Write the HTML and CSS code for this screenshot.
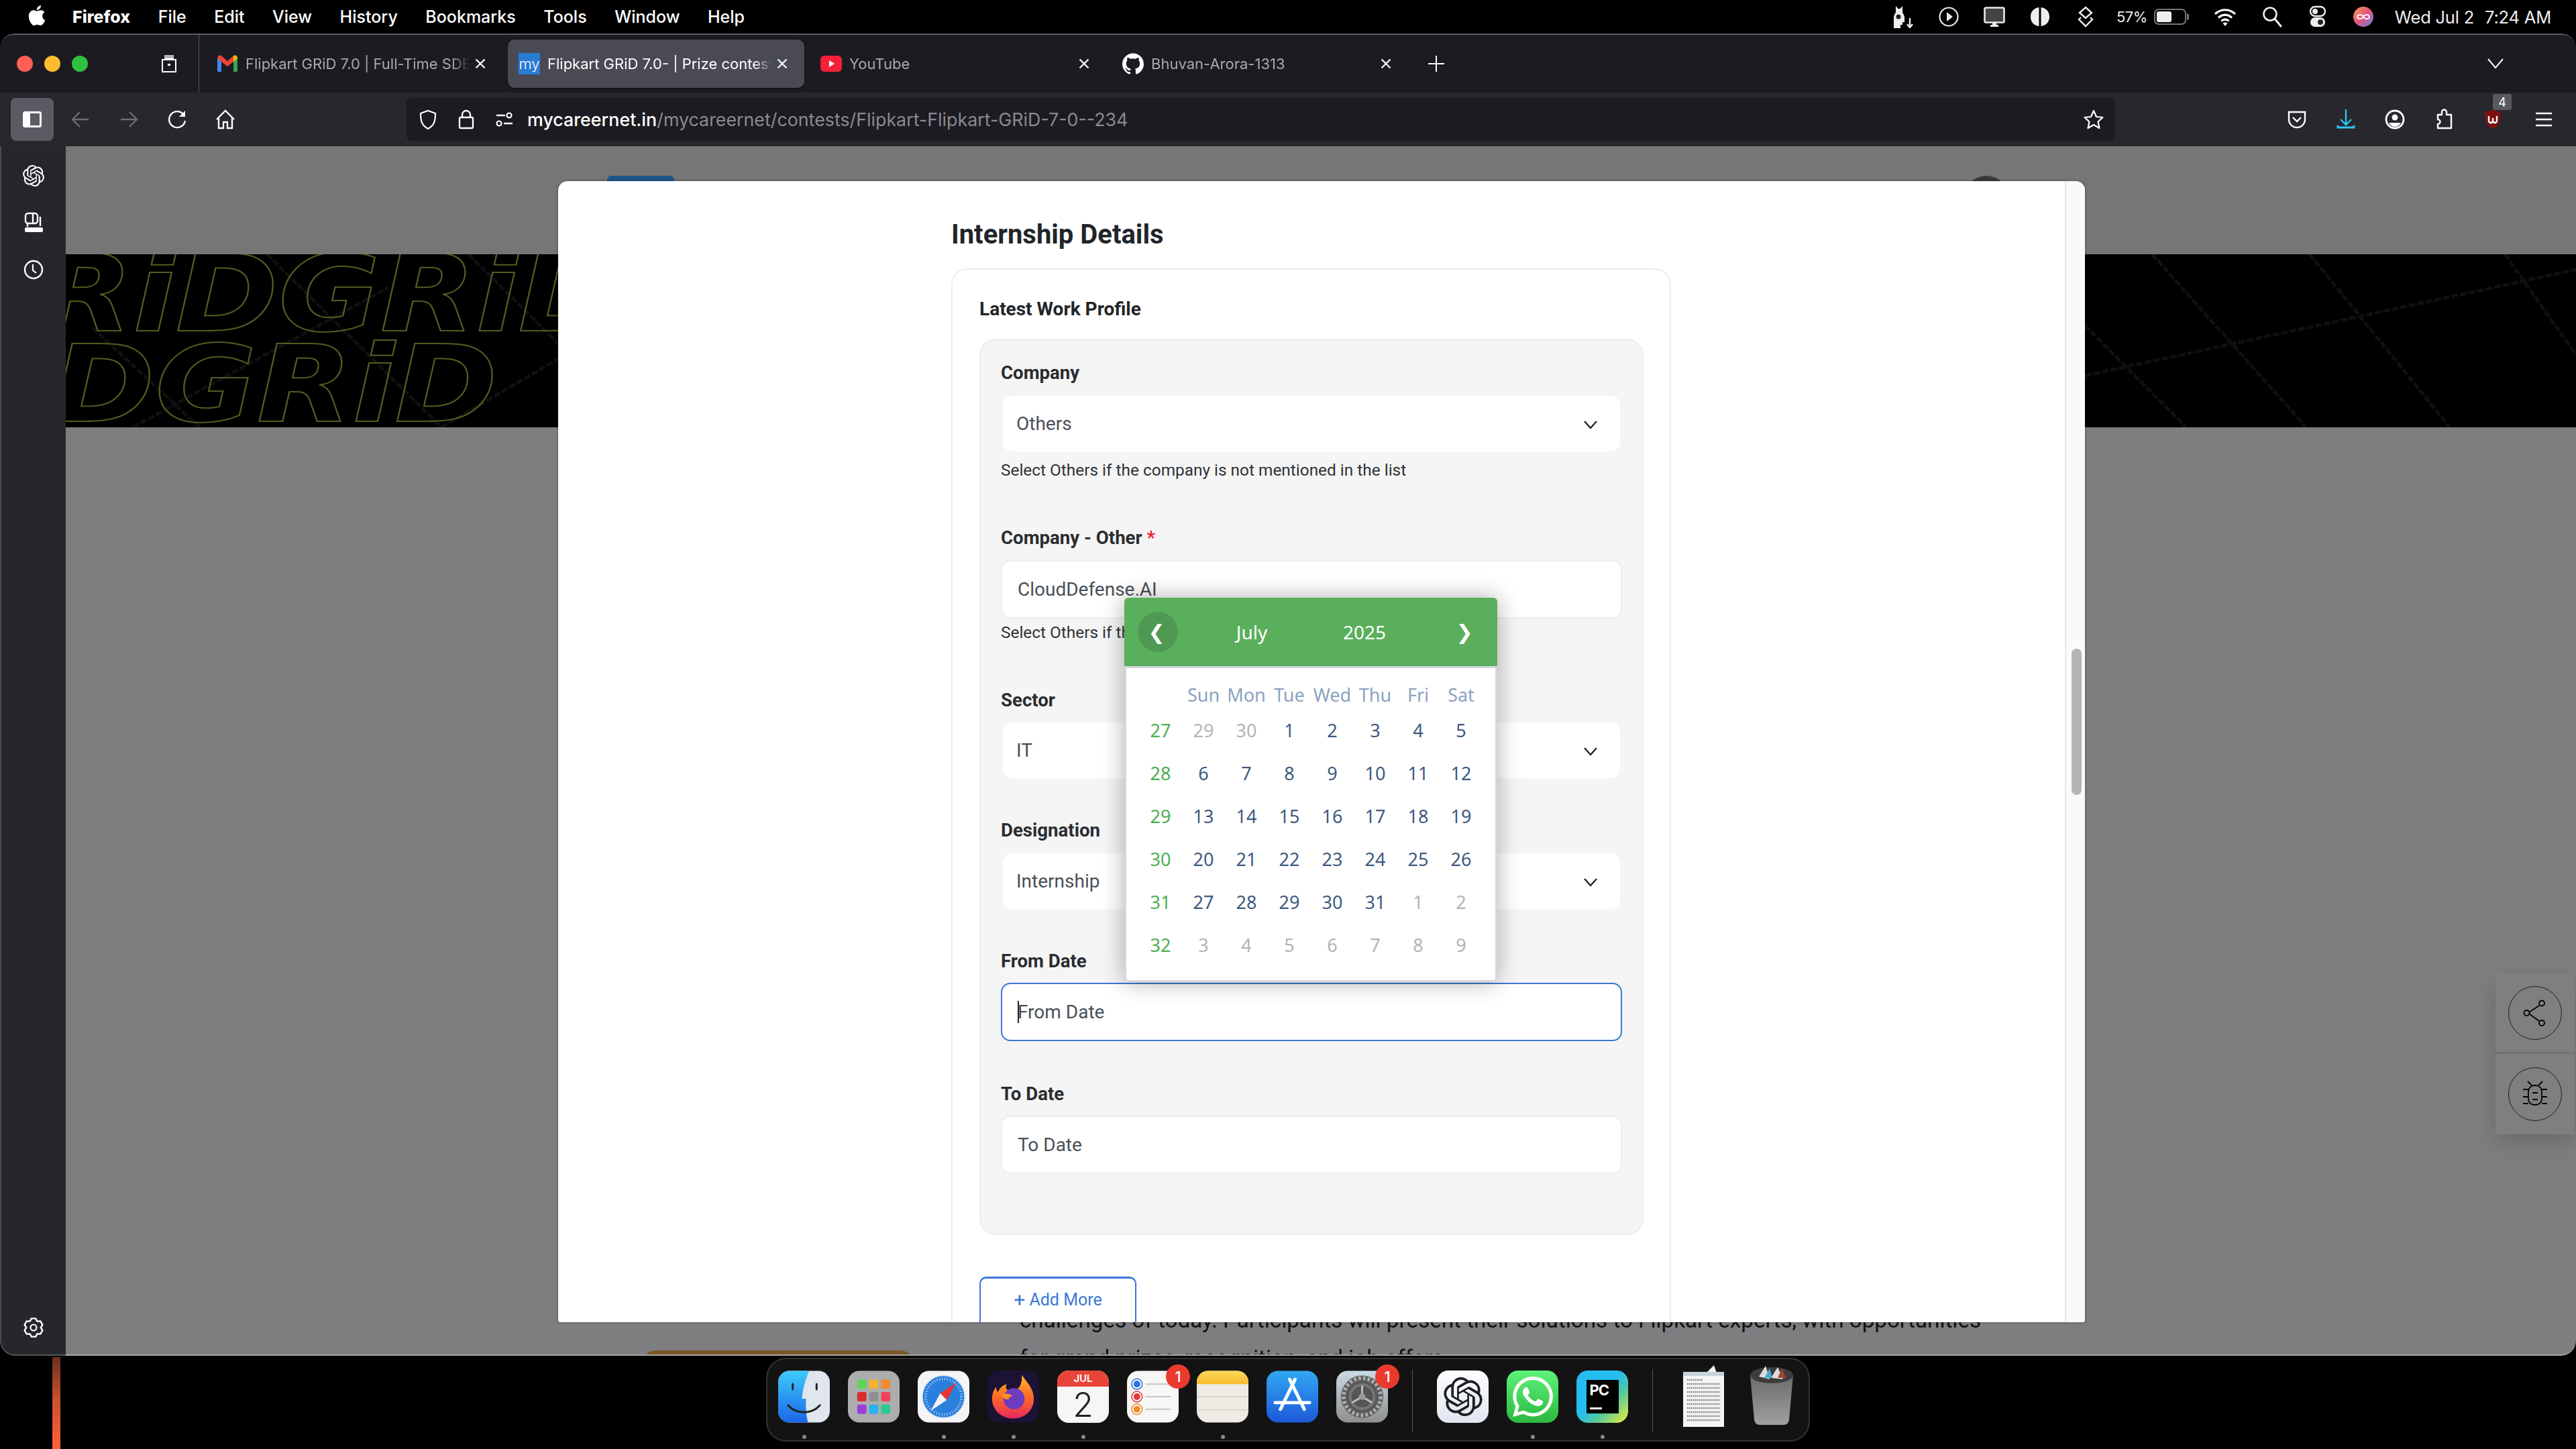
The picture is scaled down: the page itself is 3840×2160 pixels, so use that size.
FILE: index.html
```html
<!DOCTYPE html>
<html lang="en">
<head>
<meta charset="utf-8">
<title>Flipkart GRiD 7.0</title>
<link rel="stylesheet" href="styles.css">
</head>
<body>
<div class="desktop">
  <header class="menubar">
    <svg class="apple" viewBox="0 0 24 24"><path fill="#fff" d="M12.152 6.896c-.948 0-2.415-1.078-3.96-1.04-2.04.027-3.91 1.183-4.961 3.014-2.117 3.675-.546 9.103 1.519 12.09 1.013 1.454 2.208 3.09 3.792 3.039 1.52-.065 2.09-.987 3.935-.987 1.831 0 2.35.987 3.96.948 1.637-.026 2.676-1.48 3.676-2.948 1.156-1.688 1.636-3.325 1.662-3.415-.039-.013-3.182-1.221-3.22-4.857-.026-3.04 2.48-4.494 2.597-4.559-1.429-2.09-3.623-2.324-4.39-2.376-2-.156-3.675 1.09-4.61 1.09zM15.53 3.83c.843-1.012 1.4-2.427 1.245-3.83-1.207.052-2.662.805-3.532 1.818-.78.896-1.454 2.338-1.273 3.714 1.338.104 2.715-.688 3.559-1.701"/></svg>
    <nav class="menu">
      <span class="menu-app">Firefox</span><span>File</span><span>Edit</span><span>View</span><span>History</span><span>Bookmarks</span><span>Tools</span><span>Window</span><span>Help</span>
    </nav>
    <div class="status">
      <svg class="st" viewBox="0 0 34 34"><path fill="#eee" d="M3 34V18c0-3 1-5 3-7V1l3.500 4h3L16 1v10c2 2 3 5 3 8v6h-3v4h-3v5z"/><circle cx="10" cy="17" r="3.500" fill="#222"/><path stroke="#eee" stroke-width="2.400" fill="none" d="M27 19v14m-4-5 4 5 4-5"/></svg>
      <svg class="st" viewBox="0 0 34 34"><circle cx="17" cy="17" r="13.500" fill="none" stroke="#e8e8e8" stroke-width="2.200"/><path fill="#e8e8e8" d="M14 10l9 7-9 7z"/></svg>
      <svg class="st" viewBox="0 0 34 34"><rect x="2.500" y="3.500" width="29" height="22" rx="2" fill="#444" stroke="#e8e8e8" stroke-width="2.600"/><rect x="14" y="26" width="6" height="4" fill="#e8e8e8"/><rect x="11" y="29" width="12" height="3" fill="#e8e8e8"/></svg>
      <svg class="st" viewBox="0 0 34 34"><path fill="#eee" d="M15.500 3C8 4 3 9 3 17s5 13 12.500 14zM18.500 3C26 4 31 9 31 17s-5 13-12.500 14z"/></svg>
      <svg class="st" viewBox="0 0 34 34"><path fill="none" stroke="#eee" stroke-width="2.400" d="M17 3l9 8-9 8-9-8zM10 18l-3 3 10 10 10-10-3-3"/></svg>
      <div class="batt"><span class="pct">57%</span><span class="batt-shell"><span class="batt-fill"></span></span></div>
      <svg class="st wifi" viewBox="0 0 34 34"><path fill="none" stroke="#fff" stroke-width="3.200" stroke-linecap="round" d="M3 12c8-7 20-7 28 0M8 17.500c5-4.500 13-4.500 18 0M12.500 22.500c3-2 6-2 9 0"/><path fill="#fff" d="M17 31l-3.500-4.500c2-1.500 5-1.500 7 0z"/></svg>
      <svg class="st srch" viewBox="0 0 34 34"><circle cx="14" cy="13" r="9.500" fill="none" stroke="#eee" stroke-width="2.600"/><path stroke="#eee" stroke-width="3" stroke-linecap="round" d="M21 20l9 11"/></svg>
      <svg class="st" viewBox="0 0 34 34"><rect x="6" y="2" width="22" height="14" rx="7" fill="none" stroke="#eee" stroke-width="2.400"/><circle cx="13" cy="9" r="4" fill="#eee"/><rect x="6" y="18" width="22" height="14" rx="7" fill="#eee"/><circle cx="21" cy="25" r="4" fill="#222"/></svg>
      <svg class="st" viewBox="0 0 34 34"><defs><linearGradient id="siri" x1="0" y1="0" x2="1" y2="1"><stop offset="0" stop-color="#f6a44c"/><stop offset=".5" stop-color="#e6527e"/><stop offset="1" stop-color="#5a8cf0"/></linearGradient></defs><circle cx="17" cy="17" r="15" fill="url(#siri)"/><path fill="none" stroke="#fff" stroke-width="1.800" d="M17 17c-3-5-9-3-9 0s6 5 9 0 9-3 9 0-6 5-9 0z"/></svg>
      <div class="clock"><span>Wed Jul 2</span><span>7:24 AM</span></div>
    </div>
  </header>

  <div class="window">
    <div class="tabbar">
      <div class="lights"><i class="light red"></i><i class="light yellow"></i><i class="light green"></i></div>
      <div class="tabs-btn"><svg viewBox="0 0 30 30" class="ic30"><path fill="none" stroke="#fff" stroke-width="2" d="M5 9h20v18H5zM8 3.500h14"/><rect x="8" y="5.500" width="14" height="3" fill="#fff"/><rect x="13" y="15" width="4" height="3" fill="#fff"/></svg></div>
      <div class="tabs">
        <div class="tab">
          <svg class="fav" viewBox="0 0 32 32"><path fill="#4285f4" d="M1 8h6v20H3a2 2 0 0 1-2-2z"/><path fill="#34a853" d="M25 8h6v18a2 2 0 0 1-2 2h-4z"/><path fill="#ea4335" d="M1 8c0-4 4-6 7-3l8 7 8-7c3-3 7-1 7 3l-6 5-9 7-9-7z"/><path fill="#fbbc04" d="M25 5c3-3 6-1 6 3l-6 5z"/></svg>
          <span class="tab-title">Flipkart GRiD 7.0 | Full-Time SDE</span><span class="tab-x">×</span>
        </div>
        <div class="tab tab-active">
          <span class="fav fav-my">my</span>
          <span class="tab-title">Flipkart GRiD 7.0- | Prize contest</span><span class="tab-x">×</span>
        </div>
        <div class="tab">
          <svg class="fav" viewBox="0 0 32 32"><rect x="0" y="4" width="32" height="24" rx="6" fill="#f4213a"/><path fill="#fff" d="M13 11l8 5-8 5z"/></svg>
          <span class="tab-title">YouTube</span><span class="tab-x">×</span>
        </div>
        <div class="tab">
          <svg class="fav" viewBox="0 0 24 24"><path fill="#fff" d="M12 .297c-6.630 0-12 5.373-12 12 0 5.303 3.438 9.800 8.205 11.385.6.113.82-.258.82-.577 0-.285-.01-1.040-.015-2.040-3.338.724-4.042-1.610-4.042-1.610C4.422 18.070 3.633 17.700 3.633 17.700c-1.087-.744.084-.729.084-.729 1.205.084 1.838 1.236 1.838 1.236 1.070 1.835 2.809 1.305 3.495.998.108-.776.417-1.305.76-1.605-2.665-.3-5.466-1.332-5.466-5.930 0-1.310.465-2.380 1.235-3.220-.135-.303-.54-1.523.105-3.176 0 0 1.005-.322 3.300 1.230.96-.267 1.980-.399 3-.405 1.020.006 2.040.138 3 .405 2.280-1.552 3.285-1.230 3.285-1.230.645 1.653.24 2.873.12 3.176.765.84 1.230 1.910 1.230 3.220 0 4.610-2.805 5.625-5.475 5.920.42.36.81 1.096.81 2.220 0 1.606-.015 2.896-.015 3.286 0 .315.21.69.825.57C20.565 22.092 24 17.592 24 12.297c0-6.627-5.373-12-12-12"/></svg>
          <span class="tab-title">Bhuvan-Arora-1313</span><span class="tab-x">×</span>
        </div>
      </div>
      <svg class="newtab" viewBox="0 0 26 26"><path stroke="#fff" stroke-width="2" d="M13 1v24M1 13h24"/></svg>
      <svg class="tabmenu" viewBox="0 0 26 18"><path fill="none" stroke="#fff" stroke-width="2" d="M2 2l11 13L24 2"/></svg>
    </div>

    <div class="toolbar">
      <div class="side-btn"><svg viewBox="0 0 32 32" class="ic32"><rect x="3.500" y="5.500" width="25" height="21" rx="2" fill="none" stroke="#fff" stroke-width="3"/><rect x="4" y="6" width="9" height="20" fill="#fff"/></svg></div>
      <div class="tbtn"><svg viewBox="0 0 32 32" class="ic32"><path fill="none" stroke="#6d6d73" stroke-width="2.400" d="M28 16H5m10-11L4 16l11 11"/></svg></div>
      <div class="tbtn"><svg viewBox="0 0 32 32" class="ic32"><path fill="none" stroke="#6d6d73" stroke-width="2.400" d="M4 16h23M17 5l11 11-11 11"/></svg></div>
      <div class="tbtn"><svg viewBox="0 0 32 32" class="ic32"><path fill="none" stroke="#fff" stroke-width="2.400" d="M25 8A12 12 0 1 0 28 18"/><path fill="#fff" d="M28 3v9h-9z"/></svg></div>
      <div class="tbtn"><svg viewBox="0 0 32 32" class="ic32"><path fill="none" stroke="#fff" stroke-width="2.400" d="M3 16L16 3l13 13M6 14v15h7v-9h6v9h7V14"/></svg></div>
      <div class="urlbar">
        <svg viewBox="0 0 32 32" class="ic32"><path fill="none" stroke="#fff" stroke-width="2.200" d="M16 3l11 4c0 12-2 18-11 23C7 25 5 19 5 7z"/></svg>
        <svg viewBox="0 0 32 32" class="ic32 lock"><rect x="6" y="13" width="20" height="16" rx="2" fill="none" stroke="#fff" stroke-width="2.400"/><path fill="none" stroke="#fff" stroke-width="2.400" d="M10 13V9a6 6 0 0 1 12 0v4"/></svg>
        <svg viewBox="0 0 32 32" class="ic32 lock"><path stroke="#fff" stroke-width="2.400" d="M4 10h13M15 22h13"/><circle cx="23" cy="10" r="3.500" fill="none" stroke="#fff" stroke-width="2.200"/><circle cx="8" cy="22" r="3.500" fill="none" stroke="#fff" stroke-width="2.200"/></svg>
        <div class="url"><span class="url-host">mycareernet.in</span><span class="url-path">/mycareernet/contests/Flipkart-Flipkart-GRiD-7-0--234</span></div>
        <svg viewBox="0 0 32 32" class="ic32 star"><path fill="none" stroke="#fff" stroke-width="2.200" stroke-linejoin="round" d="M16 3l4 9 9.500 1-7 6.500 2 9.500-8.500-5-8.500 5 2-9.500-7-6.500 9.500-1z"/></svg>
      </div>
      <div class="tools">
        <div class="tool"><svg viewBox="0 0 32 32" class="ic32"><path fill="none" stroke="#fff" stroke-width="2.400" d="M4 5h24v11a12 12 0 0 1-24 0z"/><path fill="none" stroke="#fff" stroke-width="2.400" d="M10 13l6 6 6-6"/></svg></div>
        <div class="tool"><svg viewBox="0 0 32 32" class="ic32"><path fill="none" stroke="#2fc5f2" stroke-width="2.400" d="M16 1v23M8 16l8 8 8-8"/><path fill="none" stroke="#2fc5f2" stroke-width="3" d="M4 25v3h24v-3"/></svg></div>
        <div class="tool"><svg viewBox="0 0 32 32" class="ic32"><circle cx="16" cy="16" r="13" fill="none" stroke="#fff" stroke-width="2.800"/><circle cx="16" cy="13" r="4.500" fill="#fff"/><path fill="#fff" d="M7 21h18c-2 4-5 6-9 6s-7-2-9-6z"/></svg></div>
        <div class="tool"><svg viewBox="0 0 32 32" class="ic32"><path fill="none" stroke="#fff" stroke-width="2.400" stroke-linejoin="round" d="M13 9V5a3.500 3.500 0 0 1 7 0v4h7v20H7v-6a3.500 3.500 0 0 0 0-7V9z"/></svg></div>
        <div class="tool tool-ub"><svg viewBox="0 0 32 32" class="ic32"><path fill="#7a1210" d="M16 2l12 3c0 14-3 21-12 25C7 26 4 19 4 5z"/><path fill="none" stroke="#fff" stroke-width="2.400" d="M10 11v7a3 3 0 0 0 6 0v-4m0 4a3 3 0 0 0 6 0v-7"/></svg><span class="ub-badge">4</span></div>
        <div class="tool tool-menu"><svg viewBox="0 0 32 32" class="ic32"><path stroke="#fff" stroke-width="2.400" d="M4 7h24M4 16h24M4 25h24"/></svg></div>
      </div>
    </div>

    <div class="main">
      <aside class="sidebar">
        <div class="side-top">
          <svg viewBox="0 0 24 24" class="ic32"><path fill="#fff" d="M22.2819 9.8211a5.9847 5.9847 0 0 0-.5157-4.9108 6.0462 6.0462 0 0 0-6.5098-2.9A6.0651 6.0651 0 0 0 4.9807 4.1818a5.9847 5.9847 0 0 0-3.9977 2.9 6.0462 6.0462 0 0 0 .7427 7.0966 5.98 5.98 0 0 0 .511 4.9107 6.051 6.051 0 0 0 6.5146 2.9001A5.9847 5.9847 0 0 0 13.2599 24a6.0557 6.0557 0 0 0 5.7718-4.2058 5.9894 5.9894 0 0 0 3.9977-2.9001 6.0557 6.0557 0 0 0-.7475-7.0729zm-9.022 12.6081a4.4755 4.4755 0 0 1-2.8764-1.0408l.1419-.0804 4.7783-2.7582a.7948.7948 0 0 0 .3927-.6813v-6.7369l2.02 1.1686a.071.071 0 0 1 .038.052v5.5826a4.504 4.504 0 0 1-4.4945 4.4944zm-9.6607-4.1254a4.4708 4.4708 0 0 1-.5346-3.0137l.142.0852 4.783 2.7582a.7712.7712 0 0 0 .7806 0l5.8428-3.3685v2.3324a.0804.0804 0 0 1-.0332.0615L9.74 19.9502a4.4992 4.4992 0 0 1-6.1408-1.6464zM2.3408 7.8956a4.485 4.485 0 0 1 2.3655-1.9728V11.6a.7664.7664 0 0 0 .3879.6765l5.8144 3.3543-2.0201 1.1685a.0757.0757 0 0 1-.071 0l-4.8303-2.7865A4.504 4.504 0 0 1 2.3408 7.872zm16.5963 3.8558L13.1038 8.364 15.1192 7.2a.0757.0757 0 0 1 .071 0l4.8303 2.7913a4.4944 4.4944 0 0 1-.6765 8.1042v-5.6772a.79.79 0 0 0-.407-.667zm2.0107-3.0231l-.142-.0852-4.7735-2.7818a.7759.7759 0 0 0-.7854 0L9.409 9.2297V6.8974a.0662.0662 0 0 1 .0284-.0615l4.8303-2.7866a4.4992 4.4992 0 0 1 6.6802 4.66zM8.3065 12.863l-2.02-1.1638a.0804.0804 0 0 1-.038-.0567V6.0742a4.4992 4.4992 0 0 1 7.3757-3.4537l-.142.0805L8.704 5.459a.7948.7948 0 0 0-.3927.6813zm1.0976-2.3654l2.602-1.4998 2.6069 1.4998v2.9994l-2.5974 1.4997-2.6067-1.4997Z"/></svg>
          <svg viewBox="0 0 32 32" class="ic32"><rect x="4" y="2" width="18" height="15" rx="4" fill="none" stroke="#fff" stroke-width="2.400"/><path stroke="#fff" stroke-width="2.400" d="M15 3v13M26 7v14M7 17v5"/><rect x="3" y="23" width="27" height="7" rx="2" fill="#fff"/></svg>
          <svg viewBox="0 0 32 32" class="ic32"><circle cx="16" cy="16" r="13" fill="none" stroke="#fff" stroke-width="2.400"/><path fill="none" stroke="#fff" stroke-width="2.200" d="M15 8v9l5 4"/></svg>
        </div>
        <svg viewBox="0 0 32 32" class="ic32"><circle cx="16" cy="16" r="4.500" fill="none" stroke="#fff" stroke-width="2.200"/><path fill="none" stroke="#fff" stroke-width="2.400" stroke-linejoin="round" d="M12.850 2.360L19.150 2.360 21.400 6.650 26.240 6.450 29.390 11.900 26.800 16 29.390 20.090 26.240 25.550 21.400 25.350 19.150 29.640 12.850 29.640 10.600 25.350 5.760 25.550 2.610 20.090 5.200 16 2.610 11.900 5.760 6.450 10.600 6.650Z"/></svg>
      </aside>

      <section class="page">
        <div class="page-top">
          <span class="site-logo"></span><span class="site-avatar"></span>
        </div>
        <div class="banner">
          <svg class="banner-lines" viewBox="0 0 3742 258" preserveAspectRatio="none"><path fill="none" stroke="#101010" stroke-width="5" stroke-dasharray="10 3" d="M3110 0L3340 258M3345 0L3554 258M3636 0L3742 150M3010 106L3161 258M3010 181L3742 23M300 0L560 258M40 110L200 258M600 0L860 258M560 258L1000 0M100 258L480 50"/></svg>
          <div class="grid-row grid-row-a">GRiDGRiD</div>
          <div class="grid-row grid-row-b">GRiDGRiD</div>
        </div>
        <div class="page-rest">
          <span class="orange-bar"></span>
          <p class="page-copy">challenges of today. Participants will present their solutions to Flipkart experts, with opportunities<br>for grand prizes, recognition, and job offers</p>
        </div>

        <div class="float-tools">
          <div class="float-cell"><span class="float-circle"><svg viewBox="0 0 40 40" class="ic40"><path fill="none" stroke="#000" stroke-width="1.800" d="M11 19l15-10M11 21l15 11"/><circle cx="7.500" cy="20" r="4" fill="#808080" stroke="#000" stroke-width="1.800"/><circle cx="33" cy="5.500" r="4" fill="#808080" stroke="#000" stroke-width="1.800" transform="translate(-3 0)"/><circle cx="30" cy="35" r="4" fill="#808080" stroke="#000" stroke-width="1.800"/></svg></span></div>
          <div class="float-cell"><span class="float-circle"><svg viewBox="0 0 40 40" class="ic40"><rect x="10" y="7" width="20" height="29" rx="9" fill="none" stroke="#000" stroke-width="1.800"/><path fill="none" stroke="#000" stroke-width="1.800" d="M9 1l6 6M31 1l-6 6M2 13h8M30 13h8M2 24h8M30 24h8M2 34h8M30 34h8M16 18h8M16 28h8"/></svg></span></div>
        </div>

        <div class="modal">
          <div class="modal-scroll">
            <h2 class="modal-title">Internship Details</h2>
            <div class="card">
              <h3 class="card-title">Latest Work Profile</h3>
              <div class="panel">
                <div class="field field-first">
                  <label class="label">Company</label>
                  <div class="select"><span>Others</span><svg class="chev" viewBox="0 0 24 24"><path fill="none" stroke="#212529" stroke-width="2.400" d="M3 8l9 10 9-10"/></svg></div>
                  <p class="help">Select Others if the company is not mentioned in the list</p>
                </div>
                <div class="field field-after-help">
                  <label class="label">Company - Other <em class="req">*</em></label>
                  <div class="input">CloudDefense.AI</div>
                  <p class="help help-tight">Select Others if the company is not mentioned in the list</p>
                </div>
                <div class="field field-after-help">
                  <label class="label">Sector</label>
                  <div class="select"><span>IT</span><svg class="chev" viewBox="0 0 24 24"><path fill="none" stroke="#212529" stroke-width="2.400" d="M3 8l9 10 9-10"/></svg></div>
                </div>
                <div class="field">
                  <label class="label">Designation</label>
                  <div class="select"><span>Internship</span><svg class="chev" viewBox="0 0 24 24"><path fill="none" stroke="#212529" stroke-width="2.400" d="M3 8l9 10 9-10"/></svg></div>
                </div>
                <div class="field">
                  <label class="label label-input">From Date</label>
                  <div class="input input-focus"><i class="caret"></i>From Date</div>
                </div>
                <div class="field field-last">
                  <label class="label label-input">To Date</label>
                  <div class="input">To Date</div>
                </div>
              </div>
              <button class="add-more"><span class="plus">+</span> Add More</button>
            </div>
          </div>
          <div class="modal-track"><span class="modal-thumb"></span></div>

          <div class="calendar">
            <div class="cal-head">
              <span class="cal-prev">❮</span><span class="cal-mon">July</span><span class="cal-mon">2025</span><span class="cal-next">❯</span>
            </div>
            <div class="cal-body">
              <span></span><span class="wd">Sun</span><span class="wd">Mon</span><span class="wd">Tue</span><span class="wd">Wed</span><span class="wd">Thu</span><span class="wd">Fri</span><span class="wd">Sat</span>
              <span class="wk">27</span><span class="off">29</span><span class="off">30</span><span>1</span><span>2</span><span>3</span><span>4</span><span>5</span>
              <span class="wk">28</span><span>6</span><span>7</span><span>8</span><span>9</span><span>10</span><span>11</span><span>12</span>
              <span class="wk">29</span><span>13</span><span>14</span><span>15</span><span>16</span><span>17</span><span>18</span><span>19</span>
              <span class="wk">30</span><span>20</span><span>21</span><span>22</span><span>23</span><span>24</span><span>25</span><span>26</span>
              <span class="wk">31</span><span>27</span><span>28</span><span>29</span><span>30</span><span>31</span><span class="off">1</span><span class="off">2</span>
              <span class="wk">32</span><span class="off">3</span><span class="off">4</span><span class="off">5</span><span class="off">6</span><span class="off">7</span><span class="off">8</span><span class="off">9</span>
            </div>
          </div>
        </div>
      </section>
    </div>
  </div>

  <div class="wallpaper">
    <span class="flare"></span>
    <div class="dock">
      <div class="dock-item"><svg class="app" viewBox="0 0 78 78"><defs><linearGradient id="fb" x1="0" y1="0" x2="0" y2="1"><stop offset="0" stop-color="#3ecbfb"/><stop offset="1" stop-color="#1a66e8"/></linearGradient></defs><rect width="78" height="78" rx="17" fill="#dfe6ee"/><path fill="url(#fb)" d="M17 0h30c-6 14-10 28-11 42h6c-.5 12 0 24 3 36H17A17 17 0 0 1 0 61V17A17 17 0 0 1 17 0z"/><path stroke="#222" stroke-width="3" stroke-linecap="round" d="M22 20v8M58 20v8"/><path fill="none" stroke="#222" stroke-width="3" stroke-linecap="round" d="M15 52c12 14 36 14 48 0"/></svg><i class="dot"></i></div>
      <div class="dock-item"><svg class="app" viewBox="0 0 78 78"><rect width="78" height="78" rx="17" fill="#adadad"/><rect x="14" y="13" width="14" height="14" rx="3" fill="#5fd35a"/><rect x="32" y="13" width="14" height="14" rx="3" fill="#f5b32e"/><rect x="50" y="13" width="14" height="14" rx="3" fill="#f08a30"/><rect x="14" y="32" width="14" height="14" rx="3" fill="#d92c2c"/><rect x="32" y="32" width="14" height="14" rx="3" fill="#8e8e93"/><rect x="50" y="32" width="14" height="14" rx="3" fill="#f04358"/><rect x="14" y="51" width="14" height="14" rx="3" fill="#9a3fd8"/><rect x="32" y="51" width="14" height="14" rx="3" fill="#28b4f0"/><rect x="50" y="51" width="14" height="14" rx="3" fill="#2cc98e"/></svg><i class="dot dot-off"></i></div>
      <div class="dock-item"><svg class="app" viewBox="0 0 78 78"><rect width="78" height="78" rx="17" fill="#f4f4f6"/><circle cx="39" cy="39" r="32" fill="#2a7fdc" stroke="#cfe2f5" stroke-width="1.500"/><circle cx="39" cy="39" r="27" fill="none" stroke="#bcdcf8" stroke-width="4" stroke-dasharray="1 3"/><path fill="#e8352e" d="M58 18L34 34l10 10z"/><path fill="#f2f2f2" d="M20 60l14-26 10 10z"/></svg><i class="dot"></i></div>
      <div class="dock-item"><svg class="app" viewBox="0 0 78 78"><defs><linearGradient id="ff" x1="0" y1="0" x2="0" y2="1"><stop offset="0" stop-color="#ffb72b"/><stop offset=".5" stop-color="#ff6b22"/><stop offset="1" stop-color="#e8295f"/></linearGradient></defs><rect width="78" height="78" rx="17" fill="#1c1236"/><path fill="url(#ff)" d="M52 6c6 10 18 20 18 36 0 18-14 30-31 30S7 60 7 42c0-8 3-14 6-18 0 4 1 6 3 8 2-6 7-10 13-12-2 5-1 8 2 9 8 2 14 0 18-6 2-4 3-9 3-15z"/><circle cx="40" cy="42" r="16" fill="#6c3cbf"/><path fill="#ff8f1f" d="M22 36c6-3 12-1 16 2-5 1-6 3-6 5-5 1-9-2-10-7z"/></svg><i class="dot"></i></div>
      <div class="dock-item"><div class="app app-cal"><span class="cal-month">JUL</span><span class="cal-day">2</span></div><i class="dot"></i></div>
      <div class="dock-item"><svg class="app" viewBox="0 0 78 78"><rect width="78" height="78" rx="17" fill="#f7f6f4"/><circle cx="15" cy="20" r="5" fill="#2a72e0"/><circle cx="15" cy="20" r="8" fill="none" stroke="#2a72e0" stroke-width="1.500"/><circle cx="15" cy="39" r="5" fill="#e53935"/><circle cx="15" cy="39" r="8" fill="none" stroke="#e53935" stroke-width="1.500"/><circle cx="15" cy="58" r="5" fill="#ef8a22"/><circle cx="15" cy="58" r="8" fill="none" stroke="#ef8a22" stroke-width="1.500"/><path stroke="#c8c8c8" stroke-width="2" d="M28 20h38M28 39h38M28 58h38"/></svg><i class="dot dot-off"></i><span class="dock-badge">1</span></div>
      <div class="dock-item"><svg class="app" viewBox="0 0 78 78"><defs><linearGradient id="nt" x1="0" y1="0" x2="0" y2="1"><stop offset="0" stop-color="#ffd95a"/><stop offset="1" stop-color="#f8b92c"/></linearGradient></defs><rect width="78" height="78" rx="17" fill="#eeebe4"/><path fill="url(#nt)" d="M17 0h44a17 17 0 0 1 17 17v3H0v-3A17 17 0 0 1 17 0z"/><path stroke="#d4d1cb" stroke-width="1.500" d="M0 39h78M0 59h78"/></svg><i class="dot"></i></div>
      <div class="dock-item"><svg class="app" viewBox="0 0 78 78"><defs><linearGradient id="as" x1="0" y1="0" x2="0" y2="1"><stop offset="0" stop-color="#30a8f2"/><stop offset="1" stop-color="#1d58d8"/></linearGradient></defs><rect width="78" height="78" rx="17" fill="url(#as)"/><path stroke="#fff" stroke-width="5" stroke-linecap="round" d="M43 13L21 58M35 13l22 45M13 48h52"/></svg><i class="dot dot-off"></i></div>
      <div class="dock-item"><svg class="app" viewBox="0 0 78 78"><defs><linearGradient id="sg" x1="0" y1="0" x2="0" y2="1"><stop offset="0" stop-color="#c9dbe4"/><stop offset="1" stop-color="#8f8f8f"/></linearGradient></defs><rect width="78" height="78" rx="17" fill="url(#sg)"/><circle cx="39" cy="39" r="32" fill="#5a5a5c"/><circle cx="39" cy="39" r="28" fill="none" stroke="#aaa" stroke-width="6" stroke-dasharray="4 3"/><circle cx="39" cy="39" r="20" fill="#777"/><circle cx="39" cy="39" r="16" fill="#555"/><path stroke="#bbb" stroke-width="3" d="M39 39V22M39 39l15 9M39 39l-15 9"/><circle cx="39" cy="39" r="5" fill="#999"/></svg><i class="dot dot-off"></i><span class="dock-badge">1</span></div>
      <span class="dock-sep"></span>
      <div class="dock-item"><div class="app app-gpt"><svg viewBox="0 0 24 24" class="gpt-mark"><path fill="#1e1e22" d="M22.2819 9.8211a5.9847 5.9847 0 0 0-.5157-4.9108 6.0462 6.0462 0 0 0-6.5098-2.9A6.0651 6.0651 0 0 0 4.9807 4.1818a5.9847 5.9847 0 0 0-3.9977 2.9 6.0462 6.0462 0 0 0 .7427 7.0966 5.98 5.98 0 0 0 .511 4.9107 6.051 6.051 0 0 0 6.5146 2.9001A5.9847 5.9847 0 0 0 13.2599 24a6.0557 6.0557 0 0 0 5.7718-4.2058 5.9894 5.9894 0 0 0 3.9977-2.9001 6.0557 6.0557 0 0 0-.7475-7.0729zm-9.022 12.6081a4.4755 4.4755 0 0 1-2.8764-1.0408l.1419-.0804 4.7783-2.7582a.7948.7948 0 0 0 .3927-.6813v-6.7369l2.02 1.1686a.071.071 0 0 1 .038.052v5.5826a4.504 4.504 0 0 1-4.4945 4.4944zm-9.6607-4.1254a4.4708 4.4708 0 0 1-.5346-3.0137l.142.0852 4.783 2.7582a.7712.7712 0 0 0 .7806 0l5.8428-3.3685v2.3324a.0804.0804 0 0 1-.0332.0615L9.74 19.9502a4.4992 4.4992 0 0 1-6.1408-1.6464zM2.3408 7.8956a4.485 4.485 0 0 1 2.3655-1.9728V11.6a.7664.7664 0 0 0 .3879.6765l5.8144 3.3543-2.0201 1.1685a.0757.0757 0 0 1-.071 0l-4.8303-2.7865A4.504 4.504 0 0 1 2.3408 7.872zm16.5963 3.8558L13.1038 8.364 15.1192 7.2a.0757.0757 0 0 1 .071 0l4.8303 2.7913a4.4944 4.4944 0 0 1-.6765 8.1042v-5.6772a.79.79 0 0 0-.407-.667zm2.0107-3.0231l-.142-.0852-4.7735-2.7818a.7759.7759 0 0 0-.7854 0L9.409 9.2297V6.8974a.0662.0662 0 0 1 .0284-.0615l4.8303-2.7866a4.4992 4.4992 0 0 1 6.6802 4.66zM8.3065 12.863l-2.02-1.1638a.0804.0804 0 0 1-.038-.0567V6.0742a4.4992 4.4992 0 0 1 7.3757-3.4537l-.142.0805L8.704 5.459a.7948.7948 0 0 0-.3927.6813zm1.0976-2.3654l2.602-1.4998 2.6069 1.4998v2.9994l-2.5974 1.4997-2.6067-1.4997Z"/></svg></div><i class="dot dot-off"></i></div>
      <div class="dock-item"><div class="app app-wa"><svg viewBox="0 0 24 24" class="wa-mark"><path fill="#fff" d="M17.472 14.382c-.297-.149-1.758-.867-2.03-.967-.273-.099-.471-.148-.67.15-.197.297-.767.966-.94 1.164-.173.199-.347.223-.644.075-.297-.15-1.255-.463-2.39-1.475-.883-.788-1.48-1.761-1.653-2.059-.173-.297-.018-.458.13-.606.134-.133.298-.347.446-.52.149-.174.198-.298.298-.497.099-.198.05-.371-.025-.52-.075-.149-.669-1.612-.916-2.207-.242-.579-.487-.5-.669-.51-.173-.008-.371-.01-.57-.01-.198 0-.52.074-.792.372-.272.297-1.04 1.016-1.04 2.479 0 1.462 1.065 2.875 1.213 3.074.149.198 2.096 3.2 5.077 4.487.709.306 1.262.489 1.694.625.712.227 1.36.195 1.871.118.571-.085 1.758-.719 2.006-1.413.248-.694.248-1.289.173-1.413-.074-.124-.272-.198-.57-.347m-5.421 7.403h-.004a9.87 9.87 0 01-5.031-1.378l-.361-.214-3.741.982.998-3.648-.235-.374a9.86 9.86 0 01-1.51-5.26c.001-5.45 4.436-9.884 9.888-9.884 2.64 0 5.122 1.03 6.988 2.898a9.825 9.825 0 012.893 6.994c-.003 5.45-4.437 9.884-9.885 9.884m8.413-18.297A11.815 11.815 0 0012.05 0C5.495 0 .16 5.335.157 11.892c0 2.096.547 4.142 1.588 5.945L.057 24l6.305-1.654a11.882 11.882 0 005.683 1.448h.005c6.554 0 11.89-5.335 11.893-11.893a11.821 11.821 0 00-3.48-8.413z"/></svg></div><i class="dot"></i></div>
      <div class="dock-item"><div class="app app-pc"><div class="pc-box"><span class="pc-txt">PC</span><span class="pc-bar"></span></div></div><i class="dot"></i></div>
      <span class="dock-sep"></span>
      <div class="dock-item dock-doc"><svg class="app-doc" viewBox="0 0 61 92"><path fill="#f5f5f5" d="M0 10h36l10-10 4 12h11v80H0z"/><path fill="#c6d4dc" d="M0 10h61v6H0z"/><path fill="none" stroke="#8a8a8a" stroke-width="2.500" stroke-dasharray="2 1" d="M6 22h24M6 28h49M6 34h49M6 40h49M6 46h49M6 52h49M6 58h49M6 64h49M6 70h49M6 76h49M6 82h49"/></svg></div>
      <div class="dock-item dock-trash"><svg class="app-doc" viewBox="0 0 66 88"><defs><linearGradient id="tr" x1="0" y1="0" x2="0" y2="1"><stop offset="0" stop-color="#6a6a6a"/><stop offset="1" stop-color="#a0a0a0"/></linearGradient></defs><path fill="url(#tr)" d="M1 14h64l-6 66a8 8 0 0 1-8 8H15a8 8 0 0 1-8-8z"/><ellipse cx="33" cy="14" rx="32" ry="12" fill="#3c3c3c"/><path fill="#ddd" d="M14 16L24 0l6 20zM32 18L42 2l8 18z"/><path fill="#44aacc" d="M22 18l8-14 4 14z"/><path fill="#aa4433" d="M42 18l6-14 6 14z"/></svg></div>
    </div>
  </div>
</div>
</body>
</html>
```

FILE: styles.css
```css
* { box-sizing: border-box; }
html, body { margin: 0; padding: 0; }
body { width: 3840px; height: 2160px; overflow: hidden; background: #000; font-family: "Roboto", "Liberation Sans", sans-serif; }
p, h2, h3 { margin: 0; }
svg { display: block; flex: none; }
.ic30 { width: 30px; height: 30px; }
.ic32 { width: 32px; height: 32px; }
.ic40 { width: 40px; height: 40px; }

.desktop { width: 3840px; height: 2160px; display: flex; flex-direction: column; position: relative; }

/* menu bar */
.menubar { height: 50px; flex: none; display: flex; align-items: center; padding-left: 40px; padding-right: 37px; color: #fff; font-family: "Inter", "Liberation Sans", sans-serif; font-size: 25px; }
.apple { width: 30px; height: 30px; margin-top: -4px; }
.menu { display: flex; gap: 41.500px; margin-left: 38px; font-weight: 500; }
.menu-app { font-weight: 800; }
.status { margin-left: auto; display: flex; align-items: center; gap: 34px; color: #eee; }
.st { width: 34px; height: 34px; }
.batt { display: flex; align-items: center; gap: 10px; margin-left: -5px; }
.pct { font-size: 22px; letter-spacing: -.5px; }
.batt-shell { width: 48px; height: 24px; border: 2px solid #777; border-radius: 7px; padding: 2px; display: block; position: relative; }
.batt-shell::after { content: ""; position: absolute; right: -6px; top: 5px; width: 3px; height: 10px; background: #777; border-radius: 0 3px 3px 0; }
.batt-fill { display: block; width: 56%; height: 100%; background: #eee; border-radius: 3px; }
.wifi { margin-left: 7px; }
.srch { margin-left: 2px; }
.clock { display: flex; gap: 16px; margin-left: -4px; font-size: 25.500px; letter-spacing: -.2px; }

/* window */
.window { height: 1971px; flex: none; border-radius: 22px; overflow: hidden; border-top: 2px solid #5c5c60; display: flex; flex-direction: column; background: #1c1b21; }
.tabbar { height: 86px; flex: none; background: #1c1b21; display: flex; align-items: center; color: #fff; }
.lights { display: flex; gap: 17px; padding-left: 25px; width: 210px; }
.light { width: 24px; height: 24px; border-radius: 50%; display: block; }
.red { background: #ff5f57; }
.yellow { background: #febc2e; }
.green { background: #2fc13f; }
.tabs-btn { width: 87px; height: 86px; border-right: 1px solid #55555a; display: flex; align-items: center; padding-left: 27px; }
.tabs { display: flex; gap: 8px; margin-left: 10px; }
.tab { width: 442px; height: 72px; border-radius: 10px; display: flex; align-items: center; padding-left: 16px; color: #a9a9ae; font-family: "Inter", sans-serif; font-size: 22px; position: relative; }
.tab-active { background: #4a4a55; color: #fff; box-shadow: 0 1px 4px rgba(0,0,0,.5); }
.fav { width: 32px; height: 32px; }
.fav-my { background: #2a7bd4; color: #fff; display: flex; align-items: center; justify-content: center; font-size: 22px; font-weight: 300; height: 32px; line-height: 1; }
.tab-title { margin-left: 11px; width: 334px; white-space: nowrap; overflow: hidden; -webkit-mask-image: linear-gradient(to left, transparent 0, #000 26px); mask-image: linear-gradient(to left, transparent 0, #000 26px); }
.tab-x { width: 32px; text-align: center; color: #fff; font-size: 32px; font-weight: 300; line-height: 1; margin-top: -4px; }
.newtab { width: 26px; height: 26px; margin-left: 29px; }
.tabmenu { width: 26px; height: 18px; margin-left: auto; margin-right: 107px; }

.toolbar { height: 80px; flex: none; background: #27272d; display: flex; align-items: center; padding-left: 16px; }
.side-btn { width: 64px; height: 64px; border-radius: 8px; background: #5b5b63; display: flex; align-items: center; justify-content: center; }
.tbtn { width: 72px; height: 64px; display: flex; align-items: center; justify-content: center; }
.side-btn + .tbtn { margin-left: 4px; }
.urlbar { margin-left: 234px; width: 2547px; height: 64px; background: #1c1b21; border-radius: 8px; display: flex; align-items: center; padding: 0 16px; }
.lock { margin-left: 25px; }
.url { margin-left: 18px; font-family: "Inter", sans-serif; font-size: 26.800px; white-space: nowrap; }
.url-host { color: #fff; font-weight: 500; }
.url-path { color: #8a8a90; }
.star { margin-left: auto; }
.tools { display: flex; margin-left: 234px; }
.tool { width: 73px; height: 64px; display: flex; align-items: center; justify-content: center; position: relative; }
.tool-menu { margin-left: 3px; }
.ub-badge { position: absolute; left: 37px; top: -6px; width: 28px; height: 24px; background: #5a5a5e; color: #fff; font: 18px "Inter", sans-serif; display: flex; align-items: center; justify-content: center; border-radius: 3px; }

.main { flex: 1; min-height: 0; display: flex; }
.sidebar { width: 98px; flex: none; background: #26262c; display: flex; flex-direction: column; align-items: center; justify-content: space-between; padding: 28px 0 24px 0; border-left: 2px solid #4a4a4e; border-bottom: 2px solid #55555a; border-bottom-left-radius: 22px; }
.side-top { display: flex; flex-direction: column; gap: 38px; }

/* page behind the dialog */
.page { flex: 1; min-width: 0; position: relative; overflow: hidden; display: flex; flex-direction: column; background: #7e7e80; border-bottom: 2px solid #a8a8a8; border-bottom-right-radius: 22px; }
.page-top { height: 161px; flex: none; background: #767676; display: flex; justify-content: space-between; align-items: flex-start; padding: 44px 846px 0 807px; }
.site-logo { width: 100px; height: 16px; background: #1f5488; border-radius: 6px 6px 0 0; }
.site-avatar { width: 66px; height: 66px; border-radius: 50%; background: #3a3a3a; }
.banner { height: 258px; flex: none; background: #000; overflow: hidden; position: relative; }
.banner-lines { position: absolute; left: 0; top: 0; width: 3742px; height: 258px; }
.grid-row { position: relative; font-family: "DejaVu Sans", sans-serif; font-style: italic; font-weight: 700; font-size: 158px; line-height: 135px; height: 135px; white-space: nowrap; color: transparent; -webkit-text-stroke: 2px #4e5f1f; transform: scaleX(1.17); transform-origin: left center; }
.grid-row-a { margin-left: -194px; margin-top: -8px; }
.grid-row-b { margin-left: -378px; }
.page-rest { flex: 1; min-height: 0; display: flex; align-items: flex-end; padding-left: 857px; }
.orange-bar { width: 410px; height: 34px; margin-bottom: -28px; background: #7a5823; border-radius: 24px 24px 0 0; flex: none; }
.page-copy { margin-left: 155px; margin-bottom: -34px; font-size: 33.200px; line-height: 57px; color: #111; white-space: nowrap; flex: none; }

.float-tools { position: absolute; right: 2px; top: 1233px; width: 118px; background: #7f7f7f; box-shadow: 0 12px 30px rgba(0,0,0,.16); }
.float-cell { height: 120px; display: flex; align-items: center; justify-content: center; border-bottom: 3px solid #727272; }
.float-cell:last-child { border-bottom: 0; }
.float-circle { width: 80px; height: 80px; border: 1.500px solid #1c1c30; border-radius: 50%; display: flex; align-items: center; justify-content: center; }

/* dialog */
.modal { position: absolute; left: 734px; top: 52px; width: 2276px; height: 1701px; background: #fff; border-radius: 14px 14px 4px 4px; box-shadow: 0 0 4px rgba(0,0,0,.35); overflow: hidden; display: flex; }
.modal-scroll { width: 2246px; flex: none; padding: 56px 0 0 586px; }
.modal-title { font-size: 40px; line-height: 48px; font-weight: 700; color: #212529; }
.card { width: 1073px; margin-top: 26px; border: 2px solid #ededed; border-radius: 24px; padding: 42px 39px 0 40px; height: 1700px; }
.card-title { font-size: 28px; line-height: 34px; font-weight: 700; color: #212529; }
.panel { margin-top: 27px; background: #f5f5f5; border: 2px solid #ededed; border-radius: 24px; padding: 32px 30px 89px; }
.field { margin-top: 61px; }
.field-first { margin-top: 0; }
.field-after-help { margin-top: 69px; }
.field-last { margin-top: 62px; }
.label { display: block; font-size: 27.600px; line-height: 34px; font-weight: 700; color: #2a2d31; margin-bottom: 17px; }
.label-input { margin-bottom: 15px; }
.field-after-help .label { margin-bottom: 16px; }
.field-after-help .select { margin-top: 1px; }
.req { font-style: normal; color: #f5222d; }
.select { height: 83px; margin: 0 3px; background: #fff; border-radius: 14px; display: flex; align-items: center; justify-content: space-between; padding: 0 32px 0 20px; font-size: 28px; color: #495057; }
.chev { width: 24px; height: 24px; }
.input { height: 87px; background: #fff; border: 2px solid #eeeeee; border-radius: 14px; display: flex; align-items: center; padding-left: 23px; font-size: 28px; color: #495057; }
.input-focus { border-color: #3a78d6; }
.caret { width: 2px; height: 33px; background: #212529; display: block; margin-right: -2px; }
.help { margin-top: 13px; font-size: 24.400px; line-height: 30px; color: #2f3336; }
.help-tight { margin-top: 6px; }
.add-more { display: block; margin-top: 62px; width: 234px; height: 90px; background: #fff; border: 2px solid #3a78d6; border-top-width: 3px; border-radius: 10px; color: #3a78d6; font: 400 25px "Roboto", sans-serif; padding: 0 0 22px; }
.plus { font-size: 30px; line-height: 1; vertical-align: -2px; }
.modal-track { width: 30px; flex: none; background: #fafafa; border-left: 2px solid #e6e6e6; padding: 697px 0 0 8px; }
.modal-thumb { display: block; width: 15px; height: 218px; background: #b4b4b4; border-radius: 8px; }

/* calendar */
.calendar { position: absolute; left: 844px; top: 621px; width: 556px; height: 573px; border-radius: 6px; background: #fff; box-shadow: 0 0 34px rgba(0,0,0,.32); overflow: hidden; font-family: "Noto Sans", "Open Sans", sans-serif; display: flex; flex-direction: column; }
.cal-head { height: 102px; flex: none; background: #5aaf5c; color: #fff; display: grid; grid-template-columns: 60px 220px 116px 1fr; align-items: center; padding-left: 20px; font-size: 28px; }
.cal-prev { width: 60px; height: 60px; border-radius: 50%; background: #4f9a52; display: flex; align-items: center; justify-content: center; font-family: "DejaVu Sans", sans-serif; font-size: 30px; padding-right: 4px; }
.cal-mon { text-align: center; }
.cal-next { font-family: "DejaVu Sans", sans-serif; font-size: 30px; padding-left: 42px; text-align: center; }
.cal-body { flex: 1; border: 3px solid #d3d8de; border-radius: 0 0 6px 6px; padding: 18px 0 0 19px; display: grid; grid-template-columns: repeat(8, 64px); grid-template-rows: 42px repeat(6, 64px); align-content: start; text-align: center; font-size: 27px; color: #3d5a80; }
.cal-body span { display: flex; align-items: center; justify-content: center; }
.wd { color: #8aa2bf; }
.wk { color: #4caf50; }
.off { color: #b4b4b4; }

/* dock area */
.wallpaper { flex: 1; min-height: 0; position: relative; display: flex; justify-content: center; align-items: flex-start; padding-top: 3px; }
.flare { position: absolute; left: 78px; top: 2px; width: 12px; bottom: 0; background: linear-gradient(#6a2f20, #c8502e 45%, #ff6038); }
.dock { width: 1556px; height: 125px; background: #131313; border: 2px solid #333; border-radius: 30px; display: flex; align-items: flex-start; gap: 27px; padding: 17px 0 0 16px; }
.dock-item { width: 77px; position: relative; display: flex; flex-direction: column; align-items: center; flex: none; }
.app { width: 77px; height: 78px; display: block; }
.dot { width: 6px; height: 6px; border-radius: 50%; background: #8a8a8a; margin-top: 18px; display: block; }
.dot-off { background: transparent; }
.dock-badge { position: absolute; right: -17px; top: -9px; width: 36px; height: 36px; border-radius: 50%; background: #ea3a2e; color: #fff; font: 500 22px "Inter", sans-serif; display: flex; align-items: center; justify-content: center; }
.dock-sep { width: 1px; height: 94px; background: #555; margin: -2px 9px 0; flex: none; }
.app-cal { background: #f6f6f4; border-radius: 17px; overflow: hidden; display: flex; flex-direction: column; align-items: center; font-family: "Inter", sans-serif; }
.cal-month { width: 100%; height: 24px; background: #e8443a; color: #fff; font-size: 15px; font-weight: 600; text-align: center; line-height: 24px; }
.cal-day { font-size: 50px; line-height: 54px; color: #222; font-weight: 300; }
.app-gpt { background: linear-gradient(#fdfdfe, #dfe6f0); border-radius: 17px; display: flex; align-items: center; justify-content: center; }
.gpt-mark { width: 58px; height: 58px; }
.app-wa { background: linear-gradient(#5df27a, #2cb83f); border-radius: 17px; display: flex; align-items: center; justify-content: center; }
.wa-mark { width: 60px; height: 60px; }
.app-pc { background: linear-gradient(135deg, #25bdf0 0, #25bdf0 45%, #4fc8a0 65%, #f2ec3a 100%); border-radius: 17px; display: flex; align-items: center; justify-content: center; }
.pc-box { width: 48px; height: 50px; background: #000; color: #fff; padding: 2px 0 0 5px; font: 700 22px/26px "Inter", sans-serif; display: flex; flex-direction: column; justify-content: space-between; }
.pc-txt { letter-spacing: -1px; }
.pc-bar { width: 18px; height: 3px; background: #fff; margin-bottom: 6px; }
.dock-doc { width: 61px; margin-top: -8px; margin-left: 9px; }
.dock-trash { width: 66px; margin-top: -7px; margin-left: 11px; }
.app-doc { width: 100%; height: auto; }
```
